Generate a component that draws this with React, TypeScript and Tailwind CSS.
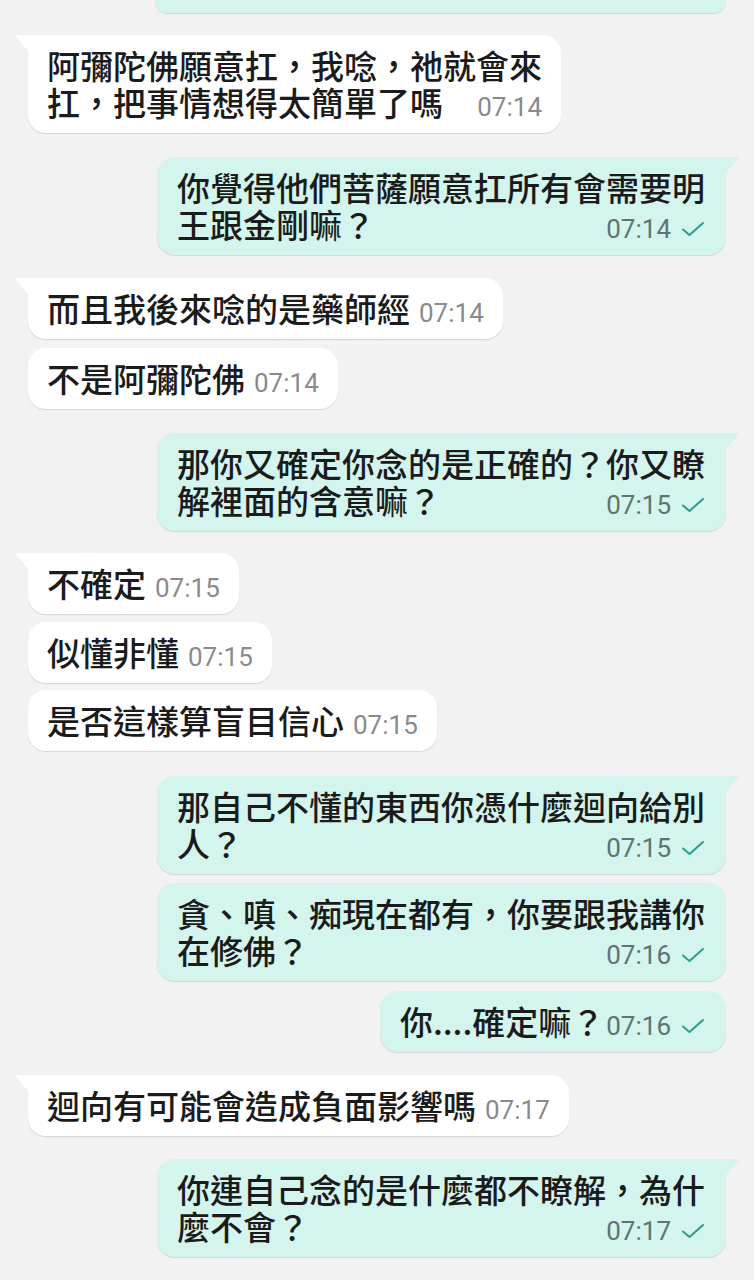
import React from 'react'

type Msg = {
  out: boolean
  tail?: boolean
  lines: string[]
  time: string
  gap: number
}

const messages: Msg[] = [
  { out: false, tail: true, lines: ['阿彌陀佛願意扛，我唸，祂就會來', '扛，把事情想得太簡單了嗎'], time: '07:14', gap: 22 },
  { out: true, tail: true, lines: ['你覺得他們菩薩願意扛所有會需要明', '王跟金剛嘛？'], time: '07:14', gap: 24 },
  { out: false, tail: true, lines: ['而且我後來唸的是藥師經'], time: '07:14', gap: 23 },
  { out: false, lines: ['不是阿彌陀佛'], time: '07:14', gap: 9 },
  { out: true, tail: true, lines: ['那你又確定你念的是正確的？你又瞭', '解裡面的含意嘛？'], time: '07:15', gap: 24 },
  { out: false, tail: true, lines: ['不確定'], time: '07:15', gap: 22 },
  { out: false, lines: ['似懂非懂'], time: '07:15', gap: 8 },
  { out: false, lines: ['是否這樣算盲目信心'], time: '07:15', gap: 7 },
  { out: true, tail: true, lines: ['那自己不懂的東西你憑什麼迴向給別', '人？'], time: '07:15', gap: 25 },
  { out: true, lines: ['貪、嗔、痴現在都有，你要跟我講你', '在修佛？'], time: '07:16', gap: 9 },
  { out: true, lines: ['你....確定嘛？'], time: '07:16', gap: 10 },
  { out: false, tail: true, lines: ['迴向有可能會造成負面影響嗎'], time: '07:17', gap: 23 },
  { out: true, tail: true, lines: ['你連自己念的是什麼都不瞭解，為什', '麼不會？'], time: '07:17', gap: 23 },
]

const Check = () => (
  <svg width="24" height="16" viewBox="0 0 24 16" className="ml-[10px] shrink-0">
    <path d="M2 8.5 L8.5 14 L22 2" fill="none" stroke="#2a9d8f" strokeWidth="2" strokeLinecap="round" strokeLinejoin="round" />
  </svg>
)

const Time = ({ out, time }: { out: boolean; time: string }) => (
  <span className="flex items-center shrink-0 translate-y-[4px]">
    <span
      className={`text-[26px] leading-[30px] font-normal ${out ? 'text-[#5f7370]' : 'text-[#8a8a8a]'}`}
      style={{ fontFamily: 'Roboto, "Liberation Sans", sans-serif' }}
    >
      {time}
    </span>
    {out && <Check />}
  </span>
)

const Tail = ({ out }: { out: boolean }) => (
  <svg
    width="15"
    height="17"
    viewBox="0 0 15 17"
    className={`absolute top-0 ${out ? 'right-[-13px]' : 'left-[-13px]'}`}
  >
    {out ? (
      <path d="M0 0 L13 0 Q15 0 14 2 L1 17 Z" fill="#d3f5ee" />
    ) : (
      <path d="M15 0 L2 0 Q0 0 1 2 L14 17 Z" fill="#ffffff" />
    )}
  </svg>
)

const Bubble = ({ msg }: { msg: Msg }) => {
  const { out, tail, lines, time } = msg
  const last = lines.length - 1
  return (
    <div
      className={`relative w-fit whitespace-nowrap py-[12px] text-[33px] leading-[37px] font-medium text-[#1b1b1b] shadow-[0_1px_1px_rgba(0,0,0,0.12)] rounded-[18px] ${
        out ? 'self-end bg-[#d3f5ee] pl-[20px] pr-[21px]' : 'self-start bg-white pl-[19px] pr-[19px]'
      } ${tail ? (out ? 'rounded-tr-none' : 'rounded-tl-none') : ''}`}
    >
      {tail && <Tail out={out} />}
      {lines.map((line, i) =>
        i === last ? (
          <div key={i} className={`flex items-center ${lines.length > 1 ? 'justify-between' : ''}`}>
            <span>{line}</span>
            <span className={line.endsWith('？') ? 'ml-[2px]' : 'ml-[9px]'}>
              <Time out={out} time={time} />
            </span>
          </div>
        ) : (
          <div key={i}>{line}</div>
        )
      )}
    </div>
  )
}

export default function App() {
  return (
    <div
      className="w-[754px] h-[1280px] overflow-hidden bg-[#f2f2f2] px-[28px] flex flex-col"
      style={{ fontFamily: '"Noto Sans CJK TC", "Noto Sans", sans-serif' }}
    >
      <div className="self-end w-[571px] h-[13px] bg-[#d3f5ee] rounded-b-[18px] shadow-[0_1px_1px_rgba(0,0,0,0.12)]" />
      {messages.map((m, i) => (
        <div key={i} className="flex flex-col" style={{ marginTop: m.gap }}>
          <Bubble msg={m} />
        </div>
      ))}
    </div>
  )
}
